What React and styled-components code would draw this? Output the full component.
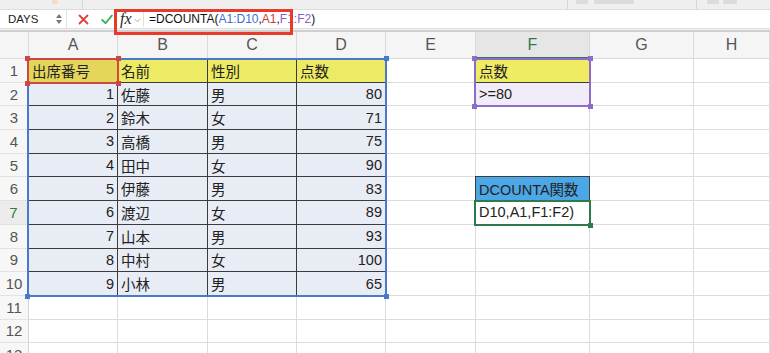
import styled, { createGlobalStyle } from "styled-components";

const Global = createGlobalStyle`
  html, body {
    margin: 0;
    padding: 0;
    background: #ffffff;
    overflow: hidden;
  }
  body {
    font-family: "Liberation Sans", "Noto Sans CJK JP", sans-serif;
  }
`;

const Page = styled.div`
  width: 770px;
  height: 353px;
  overflow: hidden;
  display: flex;
  flex-direction: column;
  & > * {
    flex-shrink: 0;
  }
`;

const TopStrip = styled.div`
  height: 9px;
  background: #efefef;
  border-bottom: 1px solid #dcdcdc;
  display: flex;
  align-items: stretch;
`;

const StripSep = styled.div`
  width: ${(p) => p.$w}px;
  border-right: 1px solid #d6d6d6;
  flex-shrink: 0;
`;

const StripGhost = styled.div`
  width: ${(p) => p.$w}px;
  height: 4px;
  margin-left: ${(p) => p.$ml}px;
  background: ${(p) => p.$c || "#dcdcdc"};
  border-radius: 1px;
  flex-shrink: 0;
`;

const FormulaBar = styled.div`
  height: 18px;
  background: #ffffff;
  border-bottom: 1px solid #dedede;
  display: flex;
  align-items: center;
  position: relative;
  z-index: 5;
`;

const NameBox = styled.div`
  width: 67px;
  height: 18px;
  display: flex;
  align-items: center;
  justify-content: space-between;
  padding: 0 4px 0 8px;
  box-sizing: border-box;
  font-size: 11.5px;
  color: #222;
  border-right: 1px solid #e2e2e2;
`;

const Spinner = styled.div`
  display: flex;
  flex-direction: column;
  gap: 2px;
`;

const Tri = styled.div`
  width: 0;
  height: 0;
  border-left: 3px solid transparent;
  border-right: 3px solid transparent;
  ${(p) => (p.$down ? "border-top: 4px solid #777;" : "border-bottom: 4px solid #777;")}
`;

const Actions = styled.div`
  display: flex;
  align-items: center;
  gap: 12px;
  padding-left: 11px;
  width: 47px;
  box-sizing: border-box;
`;

const FxGroup = styled.div`
  position: relative;
  flex: 1;
  display: flex;
  align-items: center;
  height: 18px;
`;

const FxBox = styled.div`
  width: 29px;
  height: 18px;
  display: flex;
  align-items: center;
  gap: 2px;
  padding-left: 6px;
  box-sizing: border-box;
  font-family: "Liberation Serif", serif;
  font-style: italic;
  font-size: 16px;
  color: #2a2a2a;
`;

const Chev = styled.svg`
  flex-shrink: 0;
  margin-top: 2px;
`;

const Input = styled.div`
  flex: 1;
  height: 16px;
  border-left: 1px solid #e0e0e0;
  display: flex;
  align-items: center;
  padding-left: 5px;
  font-size: 12px;
  color: #111;
  background: #fff;
`;

const Ref = styled.span`
  color: ${(p) => p.$c};
`;

const Callout = styled.div`
  position: absolute;
  left: 0;
  top: -1px;
  width: 179px;
  height: 26px;
  border: 3px solid #e83a2a;
  box-sizing: border-box;
  pointer-events: none;
`;

const Band = styled.div`
  height: 1px;
  background: #f4f4f4;
  border-bottom: 2px solid #cfcfcf;
`;

const Sheet = styled.div`
  display: grid;
  grid-template-columns: 29px 89px 90px 89px 89px 90px 114px 104px 1fr;
  grid-template-rows: 27px repeat(13, 23.7px);
  font-size: 14.5px;
  color: #222;
`;

const at = (p) => `grid-row: ${p.$gr}; grid-column: ${p.$gc};`;

const ColHead = styled.div`
  ${at}
  display: flex;
  align-items: center;
  justify-content: center;
  background: ${(p) => (p.$active ? "#e6e6e6" : "#f5f5f5")};
  color: ${(p) => (p.$active ? "#2f7a4b" : "#555")};
  border-right: 1px solid #dadada;
  border-bottom: ${(p) => (p.$active ? "2px solid #2f7a4b" : "1px solid #dadada")};
  box-sizing: border-box;
  font-size: 16px;
`;

const RowHead = styled.div`
  ${at}
  display: flex;
  align-items: center;
  justify-content: center;
  background: ${(p) => (p.$active ? "#ececec" : "#f7f7f7")};
  color: ${(p) => (p.$active ? "#2f7a4b" : "#555")};
  border-right: ${(p) => (p.$active ? "2px solid #2f7a4b" : "1px solid #d4d4d4")};
  border-bottom: 1px solid #e2e2e2;
  box-sizing: border-box;
  font-size: 15px;
`;

const Cell = styled.div`
  ${at}
  display: flex;
  align-items: center;
  justify-content: ${(p) => (p.$right ? "flex-end" : "flex-start")};
  padding: 0 3px;
  box-sizing: border-box;
  background: ${(p) => p.$bg || "#ffffff"};
  border-right: 1px solid ${(p) => (p.$dark ? "#3c3c3c" : "#dcdcdc")};
  border-bottom: 1px solid ${(p) => (p.$dark ? "#3c3c3c" : "#dcdcdc")};
  ${(p) => (p.$boxed ? "border-left: 1px solid #3c3c3c; border-top: 1px solid #3c3c3c; margin: -1px 0 0 -1px;" : "")}
  white-space: nowrap;
  overflow: visible;
`;

const Range = styled.div`
  grid-column: ${(p) => p.$col};
  grid-row: ${(p) => p.$row};
  margin: -1px -1px -1px -2px;
  border: 2px solid ${(p) => p.$c};
  position: relative;
  z-index: ${(p) => p.$z || 2};
  pointer-events: none;
`;

const Handle = styled.div`
  position: absolute;
  width: 5px;
  height: 5px;
  background: ${(p) => p.$c};
  ${(p) => (p.$top ? "top: -4px;" : "bottom: -4px;")}
  ${(p) => (p.$left ? "left: -4px;" : "right: -4px;")}
`;

const cols = ["A", "B", "C", "D", "E", "F", "G", "H"];

const table = [
  ["出席番号", "名前", "性別", "点数"],
  [1, "佐藤", "男", 80],
  [2, "鈴木", "女", 71],
  [3, "高橋", "男", 75],
  [4, "田中", "女", 90],
  [5, "伊藤", "男", 83],
  [6, "渡辺", "女", 89],
  [7, "山本", "男", 93],
  [8, "中村", "女", 100],
  [9, "小林", "男", 65],
];

const side = {
  1: { text: "点数", bg: "#efeb63", dark: true },
  2: { text: ">=80", bg: "#f1edf8" },
  6: { text: "DCOUNTA関数", bg: "#4ba7e5", dark: true, boxed: true },
  7: { text: "D10,A1,F1:F2)" },
};

function cellFor(r, c) {
  // r: 1-based sheet row, c: 0-based column (A=0)
  const pos = { $gr: r + 1, $gc: c + 2 };
  const key = `${r}-${c}`;
  if (r <= 10 && c < 4) {
    const v = table[r - 1][c];
    const head = r === 1;
    let bg = head ? "#eceb63" : "#e8ecf5";
    if (head && c === 0) bg = "#e4d65b";
    return (
      <Cell key={key} {...pos} $bg={bg} $dark $right={!head && typeof v === "number"}>
        {v}
      </Cell>
    );
  }
  if (c === 5 && side[r]) {
    const s = side[r];
    return (
      <Cell key={key} {...pos} $bg={s.bg} $dark={s.dark} $boxed={s.boxed}>
        {s.text}
      </Cell>
    );
  }
  return <Cell key={key} {...pos} />;
}

export default function App() {
  const rows = Array.from({ length: 13 }, (_, i) => i + 1);
  return (
    <Page>
      <Global />
      <TopStrip>
        <StripGhost $w={6} $ml={52} $c="#f3dccd" />
        <StripSep $w={24} />
        <StripSep $w={484} />
        <StripGhost $w={12} $ml={8} />
        <StripGhost $w={40} $ml={6} />
        <StripSep $w={62} />
        <StripGhost $w={12} $ml={10} />
        <StripGhost $w={14} $ml={4} />
      </TopStrip>

      <FormulaBar>
        <NameBox>
          DAYS
          <Spinner>
            <Tri />
            <Tri $down />
          </Spinner>
        </NameBox>
        <Actions>
          <svg width="11" height="11" viewBox="0 0 11 11">
            <path d="M1.5 1.5 L9.5 9.5 M9.5 1.5 L1.5 9.5" stroke="#e0403a" strokeWidth="1.8" strokeLinecap="round" />
          </svg>
          <svg width="12" height="11" viewBox="0 0 12 11">
            <path d="M1.2 6 L4.5 9.2 L10.8 1.6" stroke="#3fae52" strokeWidth="1.8" fill="none" strokeLinecap="round" strokeLinejoin="round" />
          </svg>
        </Actions>
        <FxGroup>
          <FxBox>
            fx
            <Chev width="7" height="5" viewBox="0 0 7 5">
              <path d="M0.6 0.8 L3.5 3.8 L6.4 0.8" stroke="#b0b0b0" strokeWidth="1" fill="none" />
            </Chev>
          </FxBox>
          <Input>
            =DCOUNTA(<Ref $c="#3b6fd6">A1:D10</Ref>,<Ref $c="#c9393b">A1</Ref>,<Ref $c="#8a5cc9">F1:F2</Ref>)
          </Input>
          <Callout />
        </FxGroup>
      </FormulaBar>
      <Band />

      <Sheet>
        <ColHead $gr={1} $gc={1} />
        {cols.map((c, i) => (
          <ColHead key={c} $gr={1} $gc={i + 2} $active={c === "F"}>
            {c}
          </ColHead>
        ))}
        {rows.map((r) => [
          <RowHead key={`h${r}`} $gr={r + 1} $gc={1} $active={r === 7}>
            {r}
          </RowHead>,
          ...cols.map((_, c) => cellFor(r, c)),
        ])}

        <Range $col="2 / 6" $row="2 / 12" $c="#4a78cc">
          <Handle $c="#4a78cc" $top />
          <Handle $c="#4a78cc" $left />
          <Handle $c="#4a78cc" />
        </Range>
        <Range $col="2 / 3" $row="2 / 3" $c="#cf4646" $z={3}>
          <Handle $c="#cf4646" $top $left />
          <Handle $c="#cf4646" $top />
          <Handle $c="#cf4646" $left />
          <Handle $c="#cf4646" />
        </Range>
        <Range $col="7 / 8" $row="2 / 4" $c="#8e6ccb">
          <Handle $c="#8e6ccb" $top $left />
          <Handle $c="#8e6ccb" $top />
          <Handle $c="#8e6ccb" $left />
          <Handle $c="#8e6ccb" />
        </Range>
        <Range $col="7 / 8" $row="8 / 9" $c="#2f7a4b">
          <Handle $c="#2f7a4b" />
        </Range>
      </Sheet>
    </Page>
  );
}
